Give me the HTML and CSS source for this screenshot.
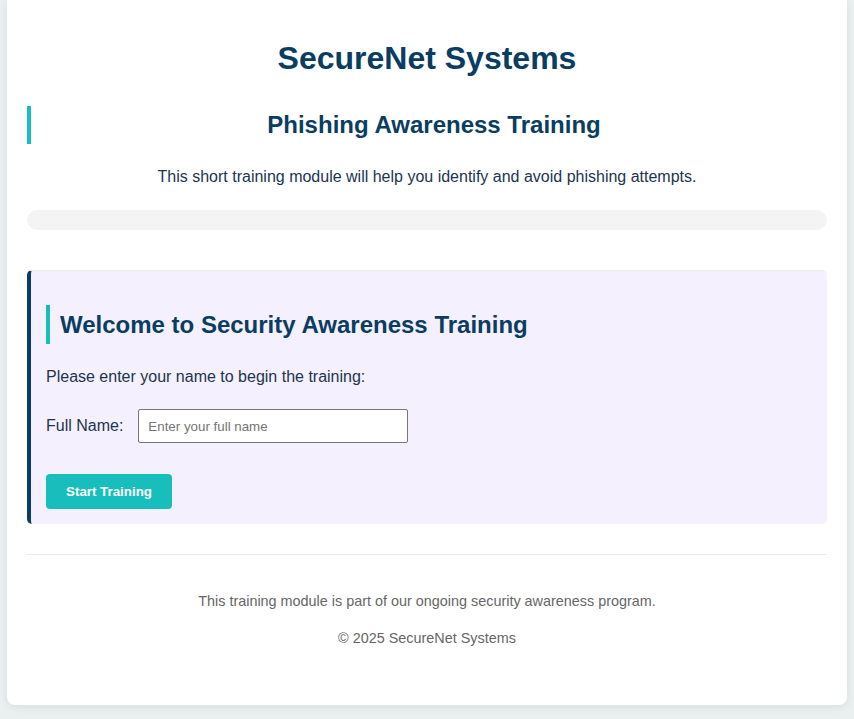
FILE: index.html
```html
<!DOCTYPE html>
<html lang="en">
<head>
<meta charset="utf-8">
<title>SecureNet Systems - Phishing Awareness Training</title>
<link rel="stylesheet" href="styles.css">
</head>
<body>
<div class="container">
  <header class="header">
    <h1 class="brand">SecureNet Systems</h1>
    <h2 class="module-title">Phishing Awareness Training</h2>
    <p class="intro">This short training module will help you identify and avoid phishing attempts.</p>
  </header>
  <div class="progress"><div class="progress-fill"></div></div>
  <section class="panel">
    <h3 class="panel-title">Welcome to Security Awareness Training</h3>
    <p class="panel-text">Please enter your name to begin the training:</p>
    <div class="form-row">
      <label class="label" for="fullname">Full Name:</label>
      <input class="input" id="fullname" type="text" placeholder="Enter your full name">
    </div>
    <button class="btn" type="button">Start Training</button>
  </section>
  <footer class="footer">
    <p class="footer-text">This training module is part of our ongoing security awareness program.</p>
    <p class="footer-text">© 2025 SecureNet Systems</p>
  </footer>
</div>
</body>
</html>
```

FILE: styles.css
```css
html, body {
  margin: 0;
  padding: 0;
}
body {
  background: #e9f0ef;
  font-family: "Liberation Sans", Arial, sans-serif;
  color: #213547;
  padding-bottom: 15px;
}
.container {
  width: 800px;
  margin: 0 auto;
  background: #fff;
  padding: 20px 20px 59px;
  border-radius: 0 0 8px 8px;
  box-shadow: 0 2px 8px rgba(0, 0, 0, 0.08);
}
.header {
  text-align: center;
}
.brand {
  margin: 20px 0 29px;
  font-size: 32px;
  line-height: 37px;
  color: #0a3d62;
  font-weight: bold;
}
.module-title {
  margin: 0;
  font-size: 24px;
  line-height: 28px;
  padding: 5px 0 5px 10px;
  color: #0a3d62;
  border-left: 4px solid #17bebb;
}
.intro {
  margin: 24px 0 0;
  font-size: 16px;
  line-height: 18px;
  color: #1c3550;
}
.progress {
  margin: 24px 0 40px;
  height: 20px;
  border-radius: 10px;
  background: #f4f4f4;
  overflow: hidden;
}
.progress-fill {
  width: 0;
  height: 100%;
  background: #17bebb;
}
.panel {
  background: #f5f0fd;
  border-left: 4px solid #0a3d62;
  border-top: 1px solid #ececec;
  border-radius: 5px;
  padding: 34px 15px 15px;
}
.panel-title {
  margin: 0;
  font-size: 24px;
  line-height: 29px;
  padding: 5px 0 5px 10px;
  color: #0a3d62;
  border-left: 4px solid #17bebb;
}
.panel-text {
  margin: 24px 0 0;
  font-size: 16px;
  line-height: 18px;
  color: #1c3550;
}
.form-row {
  display: flex;
  align-items: center;
  gap: 15px;
  margin-top: 23px;
}
.label {
  font-size: 16px;
  color: #1c3550;
}
.input {
  box-sizing: border-box;
  width: 270px;
  height: 34px;
  border: 1px solid #767676;
  border-radius: 2px;
  padding: 0 9px;
  font-family: "Liberation Sans", Arial, sans-serif;
  font-size: 13.33px;
  background: #fff;
}
.input::placeholder {
  color: #757575;
}
.btn {
  display: block;
  box-sizing: border-box;
  margin-top: 31px;
  width: 126px;
  height: 35px;
  border: 0;
  border-radius: 4px;
  background: #17bebb;
  color: #fff;
  font-family: "Liberation Sans", Arial, sans-serif;
  font-size: 13.33px;
  font-weight: bold;
  cursor: pointer;
}
.footer {
  margin-top: 30px;
  border-top: 1px solid #eaeaea;
  padding-top: 38px;
  text-align: center;
}
.footer-text {
  margin: 0 0 21px;
  font-size: 14.4px;
  line-height: 16px;
  color: #666;
}
.footer-text:last-child {
  margin-bottom: 0;
}
```
